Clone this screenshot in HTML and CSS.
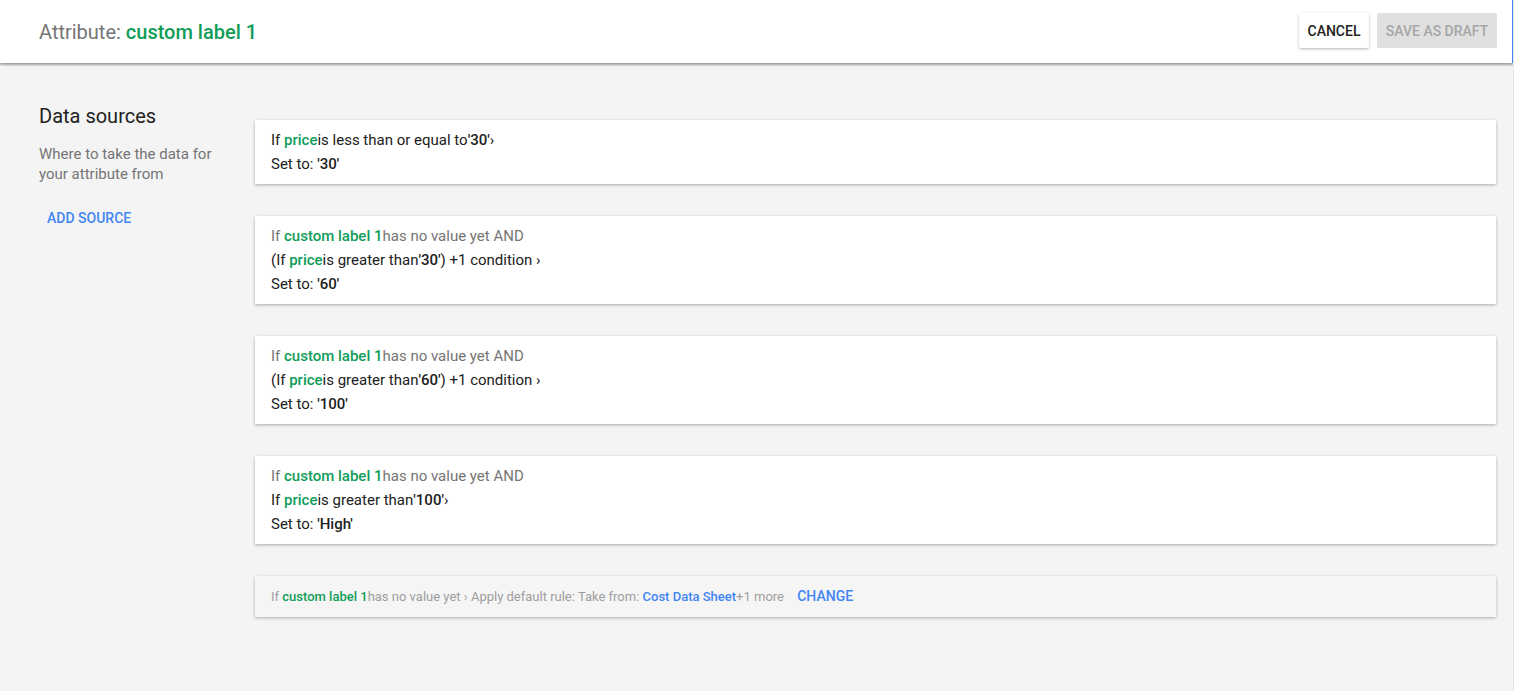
FILE: index.html
```html
<!DOCTYPE html>
<html lang="en">
<head>
    <meta charset="UTF-8">
    <meta name="viewport" content="width=device-width, initial-scale=1.0">
    <title>Attribute: custom label 1</title>
    <link rel="stylesheet" href="styles.css">
</head>
<body>
    <div class="header">
        <div class="title">Attribute: <span class="name">custom label 1</span></div>
        <div class="actions">
            <button class="btn btn-cancel">CANCEL</button>
            <button class="btn btn-draft" disabled>SAVE AS DRAFT</button>
        </div>
    </div>

    <div class="content">
        <div class="sidebar">
            <h2>Data sources</h2>
            <div class="hint">Where to take the data for your attribute from</div>
            <a href="#" class="add-source">ADD SOURCE</a>
        </div>

        <div class="rules">
            <div class="rule">
                <div>If <span class="field">price</span>is less than or equal to<b>'30'</b>&rsaquo;</div>
                <div>Set to: <b>'30'</b></div>
            </div>

            <div class="rule">
                <div class="muted">If <span class="field">custom label 1</span>has no value yet AND</div>
                <div>(If <span class="field">price</span>is greater than<b>'30'</b>) +1 condition &rsaquo;</div>
                <div>Set to: <b>'60'</b></div>
            </div>

            <div class="rule">
                <div class="muted">If <span class="field">custom label 1</span>has no value yet AND</div>
                <div>(If <span class="field">price</span>is greater than<b>'60'</b>) +1 condition &rsaquo;</div>
                <div>Set to: <b>'100'</b></div>
            </div>

            <div class="rule">
                <div class="muted">If <span class="field">custom label 1</span>has no value yet AND</div>
                <div>If <span class="field">price</span>is greater than<b>'100'</b>&rsaquo;</div>
                <div>Set to: <b>'High'</b></div>
            </div>

            <div class="rule default-rule">
                If <span class="field">custom label 1</span>has no value yet &rsaquo; Apply default rule: Take from: <span class="source">Cost Data Sheet</span>+1 more
                <a href="#" class="change">CHANGE</a>
            </div>
        </div>
    </div>
</body>
</html>
```

FILE: styles.css
```css
html, body {
    height: 100%;
}
body {
    font-family: Roboto, "Liberation Sans", sans-serif;
    margin: 0;
    background-color: #f4f4f4;
    color: #212121;
    border-right: 1px solid #e6e6e6;
    box-sizing: border-box;
}
.header {
    height: 63px;
    background-color: white;
    display: flex;
    align-items: center;
    justify-content: space-between;
    padding: 0 15px 0 39px;
    box-shadow: 0 2px 2px rgba(0, 0, 0, 0.35);
    border-right: 1px solid #4285f4;
    position: relative;
    box-sizing: border-box;
}
.title {
    font-size: 20px;
    color: #757575;
}
.title .name {
    color: #0f9d58;
    font-weight: 500;
}
.actions {
    display: flex;
    gap: 8px;
    margin-top: -2px;
}
.btn {
    font-family: inherit;
    font-size: 14px;
    font-weight: 500;
    height: 35px;
    padding: 0 8px;
    border: none;
    border-radius: 2px;
}
.btn-cancel {
    background-color: white;
    color: #212121;
    box-shadow: 0 1px 3px rgba(0, 0, 0, 0.3);
    width: 70px;
}
.btn-draft {
    background-color: #e0e0e0;
    color: #a6a6a6;
    width: 120px;
}
.content {
    display: flex;
    padding: 41px 17px 0 39px;
}
.sidebar {
    width: 216px;
    flex-shrink: 0;
}
.sidebar h2 {
    font-size: 20px;
    font-weight: 400;
    margin: 0 0 16px;
    line-height: 24px;
}
.hint {
    font-size: 15px;
    color: #757575;
    line-height: 20px;
    width: 190px;
}
.add-source {
    display: inline-block;
    margin: 26px 0 0 8px;
    font-size: 14px;
    font-weight: 500;
    color: #4285f4;
    text-decoration: none;
}
.rules {
    flex: 1;
    display: flex;
    flex-direction: column;
    gap: 32px;
    margin-top: 16px;
}
.rule {
    background-color: white;
    padding: 8px 16px;
    font-size: 15px;
    line-height: 24px;
    box-shadow: 0 1px 3px rgba(0, 0, 0, 0.3);
}
.rule b {
    font-weight: 500;
}
.muted {
    color: #757575;
}
.field {
    color: #0f9d58;
    font-weight: 500;
}
.default-rule {
    background-color: #f5f5f5;
    font-size: 13px;
    color: #9e9e9e;
    padding: 8px 16px;
    line-height: 25px;
}
.source {
    color: #4285f4;
    font-weight: 500;
}
.change {
    margin-left: 10px;
    font-size: 14px;
    font-weight: 500;
    color: #4285f4;
    text-decoration: none;
}
```
